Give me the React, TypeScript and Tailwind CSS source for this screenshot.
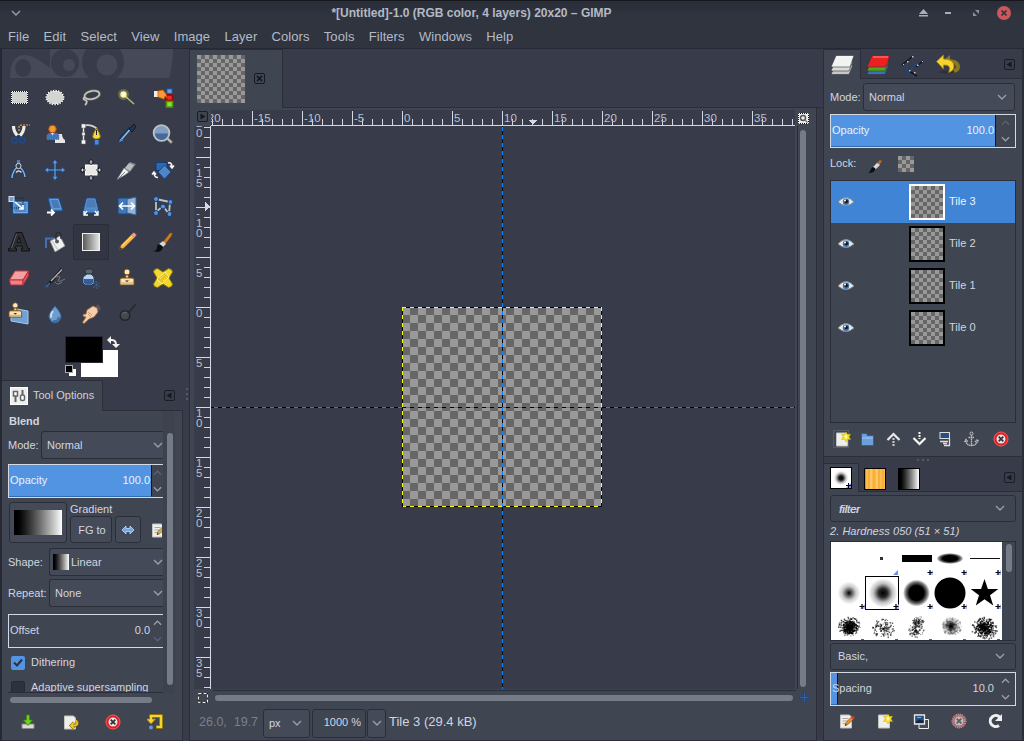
import React from 'react';

const BLUE = '#4f86c6';
const Svg = ({ children, w = 24, h = w, vb }: { children: React.ReactNode; w?: number; h?: number; vb?: string }) => (
  <svg width={w} height={h} viewBox={vb ?? `0 0 ${w} ${h}`} className="block shrink-0" fill="none">{children}</svg>
);

const Checker = ({ w, h, className = '' }: { w: number; h: number; className?: string }) => (
  <svg width={w} height={h} className={`block shrink-0 ${className}`} shapeRendering="crispEdges">
    <defs>
      <pattern id="chk4" width="8" height="8" patternUnits="userSpaceOnUse">
        <rect width="8" height="8" fill="#666" /><rect width="4" height="4" fill="#999" /><rect x="4" y="4" width="4" height="4" fill="#999" />
      </pattern>
    </defs>
    <rect width={w} height={h} fill="url(#chk4)" />
  </svg>
);

const Stamp = ({ t = '' }: { t?: string }) => (
  <g transform={t} stroke="#7a4a10" strokeWidth="1"><circle cx="12" cy="6" r="3" fill="#fbe9c4" /><path d="M10.500 9h3l.4 3.500h-3.800z" fill="#e8cf96" /><path d="M5 13.500q0-1.500 2-1.500h10q2 0 2 1.500V19H5z" fill="#f7e3b5" /><path d="M5.500 17h13" stroke="#c8a35a" /><path d="M10 14.500h4l-2 1.500z" fill="#222" stroke="none" /></g>
);

const tools: React.ReactNode[] = [
  <g shapeRendering="crispEdges"><rect x="4" y="5" width="17" height="13" fill="#cfd2cc" /><rect x="4.500" y="5.500" width="16" height="12" stroke="#fff" strokeWidth="1" /><rect x="4.500" y="5.500" width="16" height="12" stroke="#111" strokeDasharray="1 1" strokeDashoffset=".5" /></g>,
  <><ellipse cx="12" cy="11.500" rx="9" ry="7" fill="#d3d6d0" stroke="#fff" strokeWidth="1.300" /><ellipse cx="12" cy="11.500" rx="9.200" ry="7.200" stroke="#111" strokeWidth="1.200" strokeDasharray="1.200 1.500" /></>,
  <><ellipse cx="13" cy="9" rx="7.600" ry="4" stroke="#77796f" strokeWidth="2.600" transform="rotate(-12 13 9)" /><ellipse cx="13" cy="9" rx="7.600" ry="4" stroke="#d4d5cd" strokeWidth="1.200" transform="rotate(-12 13 9)" /><path d="M6 11q-3 2 0 3t1 4l-1 1" stroke="#c5c6bc" strokeWidth="1.800" /></>,
  <><path d="M10 10l10 9" stroke="#3d4036" strokeWidth="3" /><path d="M10 10l9 8" stroke="#aeb184" strokeWidth="1.600" /><circle cx="8.500" cy="8.500" r="5.500" fill="#f5ef70" opacity=".25" /><circle cx="8.500" cy="8.500" r="3.200" fill="#fbf59a" /><circle cx="8.500" cy="8.500" r="1.500" fill="#fff" /></>,
  <><rect x="15.500" y="2.500" width="6" height="5.500" fill="#729fcf" stroke="#204a87" strokeWidth="1.600" /><rect x="15.500" y="9" width="6" height="5.500" fill="#ef2929" stroke="#a40000" strokeWidth="1.600" /><rect x="15.500" y="15.500" width="6" height="5.500" fill="#8ae234" stroke="#4e9a06" strokeWidth="1.600" /><path d="M3 5h4v6H3z" fill="#eee" /><path d="M7 5l5-1 3 4 1 4-2-2-1 3-6-2z" fill="#f99a35" stroke="#ce5c00" strokeWidth=".8" /></>,
  <><path d="M6.500 4q0 6 4.500 10M17 4q0 6-4.500 10" stroke="#eceee8" strokeWidth="3.200" /><path d="M12 9V5q0-2 3-2h8" stroke="#f5a52a" strokeDasharray="2 1" strokeWidth="1.200" /><path d="M11.500 13.500l-2 2m2-2l2 2" stroke="#1c3b6a" strokeWidth="2" /><ellipse cx="7.500" cy="18.500" rx="2.700" ry="2.500" stroke="#1f4986" strokeWidth="1.800" /><ellipse cx="15.500" cy="18.500" rx="2.700" ry="2.500" stroke="#1f4986" strokeWidth="1.800" /></>,
  <><path d="M12 21v-4q3 0 3-5h4q0 4 3 6v3z" fill="#e6e7e4" /><path d="M4 17.500V13l3-2h6l3 2v4.500z" fill="#3f77bd" stroke="#c04aa8" strokeDasharray="1 1" /><circle cx="9.500" cy="7" r="3.800" fill="#f39a35" stroke="#a85206" /><path d="M8 11l1.500 2.500L11 11" fill="#d5e5fa" /></>,
  <><path d="M4.500 3v19" stroke="#e9eae5" strokeWidth="1.400" /><path d="M5 3.500Q13 2 18 7" stroke="#d3d5cc" strokeWidth="1.800" /><path d="M2.500 2h4v4h-4zM2.500 18h4v4h-4zM3 10.500h3v3H3z" fill="#f5f5f2" stroke="#6c6f68" strokeWidth=".5" /><path d="M17.500 6q-4 6-4 9l2 2h4l2-2q0-3-4-9z" fill="#f3d94a" stroke="#876900" /><path d="M17.500 8v5" stroke="#222" /><path d="M15.500 17.500h4.500V23h-4.500z" fill="#4d8bd0" stroke="#204a87" /></>,
  <><path d="M4.500 20l2-4 9-10" stroke="#173152" strokeWidth="3.600" /><path d="M5 19l3-3.500 7-8" stroke="#8db8ea" strokeWidth="1.800" /><path d="M14 7l3 3 4-5-2-3z" fill="#203450" stroke="#0f1a2a" /><path d="M3.500 20.500l3-4 2 2z" fill="#4c86cf" /></>,
  <><path d="M16 16l5 5" stroke="#6b6d66" strokeWidth="3.400" /><path d="M16 16l4.500 4.500" stroke="#d0d1ca" strokeWidth="1.500" /><circle cx="10.500" cy="11" r="7.900" fill="#829ec0" stroke="#bcc1c7" strokeWidth="1.800" /><path d="M4 11.500h13a6.500 6.500 0 0 1-13 0z" fill="#45699a" /></>,
  <><path d="M11 8Q5.500 12 5 21M12 8q5.500 4 6 12" stroke="#1d3c66" strokeWidth="3.600" /><path d="M10.500 9q-5 4-5.500 11M12.500 9q5 4 5.500 10" stroke="#8fb5e1" strokeWidth="1.400" /><rect x="10" y="2" width="3" height="4" fill="#4e7fb9" /><circle cx="11.500" cy="8" r="2.600" fill="#3a3d44" stroke="#d0d4d8" /><path d="M9 14.500q2.500-3 5.500 0" stroke="#d4d7db" strokeWidth="1.500" /></>,
  <><path d="M12 3v18M3 12h18" stroke="#153e78" strokeWidth="2.600" /><path d="M12 1.500L9 5.500h6zM12 22.500l-3-4h6zM1.500 12l4-3v6zM22.500 12l-4-3v6z" fill="#5b93d7" stroke="#153e78" strokeWidth=".6" /><path d="M12 4v16M4 12h16" stroke="#6ba3e3" strokeWidth="1.200" /></>,
  <><rect x="6.500" y="7" width="11.500" height="10" fill="#e8e9e6" stroke="#fff" /><path d="M12 1l-3 3 3 3 3-3zM12 17l-3 3 3 3 3-3zM1 12l2.500-3L7 12l-3.500 3zM17 12l3-3 3 3-3 3z" fill="#15171b" /><path d="M12 2v4M10.500 4h3M12 18v4M10.500 20h3M2 12h4M18 12h4M3.500 10.500v3M20.500 10.500v3" stroke="#e6e7ea" strokeWidth=".9" /></>,
  <><path d="M15 4l6 2-6 8-6-3z" fill="#7c8087" /><path d="M14 5l5 2-4 6-5-3z" fill="#b9bcc0" /><path d="M9 10l5 4-4 3-8 4.500z" fill="#f2f2ef" stroke="#77797c" strokeWidth=".6" /><path d="M3 21l7-7" stroke="#85878a" /></>,
  <><path d="M5 4.500h11v8H5z" fill="#2f68ac" stroke="#123b73" /><path d="M13.500 7l6.500 7-6.500 7L7 14z" fill={BLUE} stroke="#174784" /><path d="M17 5q4-1 4 4m-2-1.500l2 2.500 2-2.500M7 19.500q-4 0-4-5m-2 2l2-2.500 2 2.500" stroke="#f5f7fa" strokeWidth="1.500" /></>,
  <><rect x="5.500" y="7" width="16" height="13" fill={BLUE} stroke="#174784" /><rect x="7" y="8.500" width="13" height="10" stroke="#76a8df" /><path d="M4 4h12v10H4z" stroke="#0e2240" strokeDasharray="1 1" /><rect x="2" y="2.500" width="5" height="5" fill="#719ed0" stroke="#cfe0f2" /><path d="M8 8l8 7m0-4v4h-4" stroke="#fff" strokeWidth="1.600" /></>,
  <><path d="M5 4h11l4 13H8z" fill={BLUE} stroke="#174784" /><path d="M7 5.500h8l3 9h-8z" fill="#487bb6" stroke="#76a8df" strokeWidth=".7" /><path d="M4 18.500h7m-3-3l3 3-3 3" stroke="#fff" strokeWidth="1.800" /></>,
  <><path d="M7.500 4h9l4 15h-17z" fill={BLUE} stroke="#174784" /><path d="M8 5h8l2 9H6z" fill="#4a7db8" stroke="#6d9bd0" strokeWidth=".6" /><path d="M8 17l-3 4m0-4v4h4M16 17l3 4m0-4v4h-4" stroke="#fff" strokeWidth="1.300" /></>,
  <><path d="M3 4h10v16H3z" fill="#3f77b8" stroke="#174784" /><path d="M12 5l9-2v18l-9-2z" fill="#93b3d7" stroke="#315e94" /><path d="M5 12h14M8 8.500L4.500 12 8 15.500M16 8.500l3.500 3.500-3.500 3.500" stroke="#fff" strokeWidth="1.700" /></>,
  <><path d="M5 5l14 3-1 12M5 5v13l7-6 6 8" stroke="#bfc3c5" strokeWidth="1.800" /><g fill="#5b92d3" stroke="#123b73"><circle cx="5" cy="5" r="2.500" /><circle cx="19.500" cy="8" r="2.400" /><circle cx="5" cy="19" r="2.500" /><circle cx="12" cy="12.500" r="2.500" /><circle cx="18.500" cy="20" r="2.500" /></g></>,
  <><path d="M1.500 21v-2.500H3L9 2.500h6l6 16h1.500V21h-8v-2.500h1.300l-.8-2.500H9l-.8 2.500h1.300V21zM10 12.500h4L12 7z" fill="#2c2e31" stroke="#0e0f11" strokeWidth=".9" fillRule="evenodd" /><path d="M9.500 4l-5 14" stroke="#6d7074" strokeWidth=".8" /></>,
  <><path d="M3 18V8.500h8" stroke="#4471ad" strokeWidth="2" /><path d="M7 11l10-5 5 10-10 6z" fill="#f1f2ef" stroke="#85888b" strokeWidth=".7" /><path d="M9 11l6 9" stroke="#cfd0d0" strokeWidth="1.500" /><path d="M13 10V4q3-4 5 1v4" stroke="#292c30" strokeWidth="1.300" /><circle cx="14" cy="11.500" r="2" fill="#54575c" /></>,
  <><defs><linearGradient id="bt"><stop stopColor="#555" /><stop offset="1" stopColor="#e8e8e8" /></linearGradient></defs><rect x="3.500" y="3.500" width="17" height="17" fill="url(#bt)" stroke="#f0f0ec" /></>,
  <><path d="M4 20l2-5L17 4l3 3L9 18z" fill="#f2b54a" stroke="#9a5b08" strokeWidth=".8" /><path d="M7 16L18 5" stroke="#ffe09a" /><path d="M16.500 4.500L19 2.500l2.500 2.500-2 2.500z" fill="#f2a0a0" stroke="#b04c4c" strokeWidth=".5" /><path d="M4 20l1-3 2 2z" fill="#333" /></>,
  <><path d="M12 12l7-9h2.500l-1 3-6 8z" fill="#d07c22" stroke="#804207" strokeWidth=".6" /><path d="M8 14l4-3 3 3-3 3z" fill="#d4d7d9" /><path d="M2 21q4 0 4-4t4-2l2 2q-1 5-6 5z" fill="#0d0e10" /></>,
  <><path d="M2.500 14L8 5h13.500L16 14z" fill="#f5a0a0" stroke="#c03a45" /><path d="M2.500 14H16v5H3.500z" fill="#f28088" stroke="#b62f3c" /><path d="M16 14l5.500-9v5L16 19z" fill="#da5560" stroke="#b62f3c" /></>,
  <><path d="M5 19L19 3" stroke="#1a1b1e" strokeWidth="3.200" /><path d="M8 15L19 3.500" stroke="#b5b8ba" strokeWidth="1.300" /><path d="M11 12q8-4 5 1t6 0M12 16q3 4 7 0" stroke="#74777a" /><path d="M3 21l4-4" stroke="#305f9c" strokeWidth="2" /></>,
  <><rect x="6" y="3" width="8" height="5" rx="2" fill="#5a646b" stroke="#292e33" /><path d="M8 8h4l3 3v6l-2 2H6l-2-2v-6z" fill="#bdd1e7" stroke="#1f3f6b" /><path d="M5 13h9v4l-2 1.500H7L5 17z" fill="#315e98" /><path d="M14 17l8 4m-8 1l7-6m-4-1l1 8" stroke="#3a6baa" strokeWidth="1" strokeDasharray="2 1" /></>,
  <Stamp />,
  <><g stroke="#8d7700" strokeWidth=".9"><path d="M2.500 6q0-3 4-3.500L12 6l5.500-3.500q4 .5 4 3.500L18 12l3.500 6q0 3-4 3.500L12 18l-5.500 3.500q-4-.5-4-3.500L6 12z" fill="#f2d632" strokeLinejoin="round" /><path d="M6 13L14 6l4 5-7 7z" fill="#e9c71a" stroke="#fff08a" strokeWidth="1" /></g><path d="M9 13l4-4M12 15l4-4" stroke="#fff6a5" strokeDasharray="1 1" /></>,
  <><path d="M10 7l11 2v13L4 19v-4z" fill="#6fa0d7" stroke="#a6c9ed" /><Stamp t="translate(-2.500 -2) scale(.9)" /></>,
  <><path d="M12 4Q5 12 6 15.500q2 5.500 6 5.500t6-5.500Q19 12 12 4z" fill="#6f9ccc" stroke="#315f97" /><path d="M10 9q-3 4-1.500 6.500" stroke="#c9def5" strokeWidth="2" /><path d="M10 19q5 1 6-4" stroke="#3b6ea8" strokeWidth="2" /></>,
  <><path d="M15 6l4-4 3 4-4 6z" fill="#55505a" /><path d="M8 8l6-4 4 2 1 4-4 5-5 2-5 4.500-1.500-1L7 15l-2.500-.5-.5-2 3-.5z" fill="#f3cfac" stroke="#a96a36" strokeWidth=".8" /><path d="M9 10l4 3m-4-1l3 3" stroke="#bf8555" strokeWidth=".7" /></>,
  <><path d="M13 11l8-9" stroke="#272a2d" strokeWidth="1.800" /><circle cx="10" cy="13.500" r="4.800" fill="#45484d" stroke="#222529" strokeWidth="1.500" /><path d="M7.500 12q2-3 4-1" stroke="#6d7174" /></>,
];

const Arrow = ({ up = false, dim = false, w = 10 }: { up?: boolean; dim?: boolean; w?: number }) => (
  <Svg w={w} h={6} vb="0 0 10 6"><path d={up ? 'M1 5l4-4 4 4' : 'M1 1l4 4 4-4'} stroke={dim ? '#5d6270' : '#9a9eaa'} strokeWidth="1.400" /></Svg>
);
const MenuBtn = ({ right = false }: { right?: boolean }) => (
  <Svg w={11}><rect x=".5" y=".5" width="10" height="10" rx="1.500" stroke="#1b1d24" /><path d={right ? 'M3.500 2.500v6l5-3z' : 'M7.500 2.500v6l-5-3z'} fill="#16181d" /></Svg>
);
const Close = ({ s = 16, dull = false }: { s?: number; dull?: boolean }) => (
  <Svg w={s} vb="0 0 16 16"><circle cx="8" cy="8" r="7" fill={dull ? '#a65c62' : '#dd2027'} stroke={dull ? '#dca8a8' : '#ff5a57'} strokeWidth="1" strokeDasharray={dull ? '1 1' : undefined} />{dull && <circle cx="8" cy="8" r="5.500" stroke="#cfb5b7" strokeDasharray="1 1" />}<circle cx="8" cy="8" r="4.500" fill={dull ? '#bdbebf' : '#e7e7e6'} /><path d="M5.700 5.700l4.600 4.600m0-4.600l-4.600 4.600" stroke={dull ? '#5c5e62' : '#333'} strokeWidth="1.800" /></Svg>
);
const Page = () => <path d="M2.500 1.500h9l2 2v11h-11z" fill="#eeeeea" stroke="#c3c4bf" />;
const PageStar = () => <Svg w={17} vb="0 0 17 16"><Page /><path d="M12 .5l1.500 2.500 3-.2-1.500 2.500 1.500 2.700-3-.2L12 10.500l-1.500-2.700-3 .2L9 5.300 7.500 2.800l3 .2z" fill="#f6dd24" stroke="#d2b300" strokeWidth=".5" /><path d="M12 2.500l1.500 2.500L12 8l-1.500-3z" fill="#fffab9" /></Svg>;
const PagePen = ({ y = false }: { y?: boolean }) => <Svg w={17} vb="0 0 17 16"><Page /><path d="M4.500 5h6m-6 2.500h6m-6 2.500h4" stroke="#aaa" /><path d="M7 12l1-3 6-6 2 2-6 6z" fill={y ? '#e0ae45' : '#ef8f2a'} stroke="#754500" strokeWidth=".6" /><path d="M13 4l2-2 2 2-2 2z" fill="#dd3030" /><path d="M7 12l.7-1.500L8.500 12z" fill="#111" /></Svg>;
const Dup = () => <Svg w={17} vb="0 0 17 16"><path d="M6 6h9.500v9H6z" fill="#444b58" stroke="#eceeea" /><path d="M1.500 1.500h10v9h-10z" fill="#284f84" stroke="#e8e9e6" strokeWidth="1.300" /><path d="M3 8l3-2 4.500 1v2.500H3z" fill="#15283f" /><path d="M4 4h4" stroke="#7eabe0" /></Svg>;
const Lr = () => <Svg w={14} h={10}><path d="M1 5l4-4v2.500h4V1l4 4-4 4V6.500H5V9z" fill="#73a7e6" stroke="#c1daf5" strokeWidth=".8" /></Svg>;

const Combo = ({ className = '', children, arrow = 'mr-[7px]' }: { className?: string; children: React.ReactNode; arrow?: string }) => (
  <div className={`flex items-center rounded-[3px] border border-[#2b2e39] ${className}`}><span className="flex grow items-center whitespace-nowrap">{children}</span><span className={arrow}><Arrow /></span></div>
);

const Spin = ({ label, value, fill, className, cut = false, dimUp = false, dimDown = false, inner, ink = '' }: { label: string; value: string; fill: string; className: string; cut?: boolean; dimUp?: boolean; dimDown?: boolean; inner: string; ink?: string }) => (
  <div className={`flex border border-[#d3dae3] ${cut ? 'border-r-0' : ''} ${className}`}>
    <div className={`relative h-full shrink-0 ${inner}`}>
      <div className={`absolute inset-y-0 left-0 border-r border-b border-r-[#11141b] border-b-[#2f6cb5] bg-[#5294e2] ${fill}`} />
      <div className={`relative flex h-full items-center justify-between pr-[2px] pb-[2px] pl-px ${ink}`}><span>{label}</span><span>{value}</span></div>
    </div>
    <div className="flex grow flex-col items-center justify-between overflow-hidden py-[5px]"><Arrow up dim={dimUp} w={9} /><Arrow dim={dimDown} w={9} /></div>
  </div>
);

const ruler = (a: number, b: number) => Array.from({ length: b - a + 1 }, (_, i) => a + i);

const HRuler = () => (
  <svg width="584" height="16" className="block overflow-hidden" shapeRendering="crispEdges">
    {ruler(-19, 39).map(n => <rect key={n} x={191 + n * 10} y={n % 5 ? 9 : 1} width="1" height={n % 5 ? 7 : 15} fill="#d3dae3" />)}
    <rect y="15" width="584" height="1" fill="#d3dae3" />
    {ruler(-4, 7).map(n => <text key={n} x={193 + n * 50} y="12" fontSize="11.500" fill="#b9c0cb">{n * 5}</text>)}
    <path d="M317.500 10h9l-4.500 5z" fill="#d3dae3" />
  </svg>
);
const VRuler = () => (
  <svg width="17" height="563" className="block overflow-hidden" shapeRendering="crispEdges">
    {ruler(-18, 38).map(n => <rect key={n} x={n % 5 ? 10 : 2} y={181 + n * 10} width={n % 5 ? 7 : 15} height="1" fill="#d3dae3" />)}
    <rect x="16" width="1" height="563" fill="#d3dae3" />
    {ruler(-4, 7).flatMap(n => String(n * 5).split('').map((c, i) => <text key={`${n}-${i}`} x="2" y={191 + n * 50 + i * 10} fontSize="11.500" fill="#b9c0cb">{c}</text>))}
    <path d="M11 76v9l5-4.500z" fill="#d3dae3" />
  </svg>
);

const Dash = ({ x1, y1, x2, y2, c, o = 0 }: { x1: number; y1: number; x2: number; y2: number; c: string; o?: number }) => (
  <g strokeWidth="1"><path d={`M${x1} ${y1}L${x2} ${y2}`} stroke="#000" /><path d={`M${x1} ${y1}L${x2} ${y2}`} stroke={c} strokeDasharray="4 4" strokeDashoffset={o} /></g>
);

const Canvas = () => (
  <svg width="584" height="563" className="block" shapeRendering="crispEdges">
    <defs><pattern id="chk8" x="191" y="181" width="16" height="16" patternUnits="userSpaceOnUse"><rect width="16" height="16" fill="#666" /><rect width="8" height="8" fill="#999" /><rect x="8" y="8" width="8" height="8" fill="#999" /></pattern></defs>
    <rect x="191" y="181" width="200" height="200" fill="url(#chk8)" />
    <Dash x1={191} y1={181.5} x2={391} y2={181.5} c="#ff0" />
    <Dash x1={191} y1={380.5} x2={391} y2={380.5} c="#ff0" />
    <Dash x1={191.5} y1={181} x2={191.5} y2={381} c="#ff0" />
    <Dash x1={390.5} y1={181} x2={390.5} y2={381} c="#ff0" />
    <Dash x1={0} y1={281.5} x2={584} y2={281.5} c="#0a84ff" o={5} />
    <Dash x1={291.5} y1={0} x2={291.5} y2={563} c="#0a84ff" o={7} />
  </svg>
);

const Eye = () => <Svg w={18} h={12}><path d="M1 6q8-9 16 0-8 7-16 0z" fill="#e9eae8" stroke="#868a8e" strokeWidth="1" /><circle cx="9" cy="5.700" r="3.200" fill="#3b6da9" /><circle cx="9.300" cy="5.500" r="1.700" fill="#0c1628" /><circle cx="8" cy="4.500" r="1" fill="#fff" /></Svg>;

const splat = (cx: number, cy: number, seed: number, n: number, r: number, op: number) => {
  let s = seed;
  const rnd = () => { s = (s * 16807) % 2147483647; return s / 2147483647; };
  return Array.from({ length: n }, (_, i) => {
    const a = rnd() * 6.283;
    const d = r * Math.pow(rnd(), 0.8);
    const z = rnd() > 0.6 ? 1.5 : 1;
    return <rect key={i} x={cx + Math.cos(a) * d} y={cy + Math.sin(a) * d * 0.9} width={z} height={z} fill="#000" opacity={op} />;
  });
};

const Brushes = () => (
  <svg width="171" height="98" className="block bg-white">
    <defs>
      <radialGradient id="soft"><stop stopColor="#000" /><stop offset=".25" stopColor="#000" stopOpacity=".65" /><stop offset=".6" stopColor="#000" stopOpacity=".2" /><stop offset="1" stopColor="#000" stopOpacity="0" /></radialGradient>
      <radialGradient id="mid"><stop stopColor="#000" /><stop offset=".3" stopColor="#000" stopOpacity=".85" /><stop offset=".65" stopColor="#000" stopOpacity=".25" /><stop offset="1" stopColor="#000" stopOpacity="0" /></radialGradient>
      <radialGradient id="hard"><stop offset=".55" stopColor="#000" /><stop offset=".8" stopColor="#000" stopOpacity=".55" /><stop offset="1" stopColor="#000" stopOpacity="0" /></radialGradient>
    </defs>
    <rect x="49" y="15" width="3" height="3" fill="#333" />
    <rect x="71" y="13" width="30" height="7" fill="#000" />
    <ellipse cx="119" cy="16.500" rx="13.500" ry="5.500" fill="url(#hard)" />
    <rect x="139" y="16" width="30" height="1" fill="#111" />
    <circle cx="18" cy="51" r="11.500" fill="url(#soft)" />
    <circle cx="52" cy="51" r="14.500" fill="url(#mid)" />
    <rect x="34.500" y="34.500" width="33" height="33" fill="none" stroke="#000" />
    <circle cx="85.500" cy="51" r="13.500" fill="url(#hard)" />
    <circle cx="119" cy="51" r="15.500" fill="#000" />
    <path d="M153.500 37l3.400 10h10.400l-8.300 6.300 3.200 10.200-8.700-6.200-8.700 6.200 3.200-10.200-8.300-6.300h10.400z" fill="#000" />
    {splat(18, 84, 77, 260, 11, 0.6)}{splat(18, 85, 78, 210, 7, 0.85)}
    {splat(52, 86, 991, 130, 11, 0.6)}
    {splat(85, 88, 1234, 100, 8, 0.5)}{splat(87, 79, 5234, 80, 6, 0.5)}
    <circle cx="120" cy="84" r="10" fill="url(#soft)" />{splat(120, 84, 4321, 220, 10, 0.25)}
    {splat(153, 86, 8080, 260, 13, 0.6)}{splat(153, 85, 333, 200, 8, 0.85)}
    <path d="M67 28v5h-5z" fill="#6c8cf0" />
    {[[99, 30], [133, 30], [167, 30], [31, 64], [65, 64], [99, 64], [133, 64], [167, 64]].map(([x, y]) => <g key={`${x}-${y}`}><path d={`M${x + 3} ${y - 2}v5h-5z`} fill="#a8bbff" /><path d={`M${x - 2.5} ${y + .5}h5M${x} ${y - 2}v5`} stroke="#000" strokeWidth="1.200" /></g>)}
    {[31, 65, 99, 133, 167].map(x => <path key={x} d={`M${x - 1} 97.500h3`} stroke="#c33" />)}
  </svg>
);

const ToolOptions = () => (
  <div className="h-[330px] w-[181px] border-r border-b border-[#2b2e39] bg-[#404552] pl-[6px]">
    <div className="flex h-[282px]">
      <div className="w-[155px] overflow-hidden border-b border-[#2b2e39]">
        <div className="flex h-[19px] items-center pt-[1px] pl-px font-bold">Blend</div>
        <div className="mt-px flex h-[28px] items-center"><span className="w-[33px]">Mode:</span><Combo className="h-full w-[122px] rounded-r-none border-r-0 bg-[#444a58] pl-[5px]" arrow="mr-0">Normal</Combo></div>
        <Spin label="Opacity" value="100.0" inner="w-[143px]" fill="w-[143px]" ink="text-[#edf2f8]" className="mt-[5px] h-[34px] w-full" cut dimUp />
        <div className="mt-[4px] flex h-[41px]">
          <div className="ml-px flex w-[58px] shrink-0 items-center justify-center rounded-[3px] border border-[#2b2e39] bg-[#444a58]"><div className="h-[25px] w-[48px] bg-linear-to-r from-black to-white" /></div>
          <div className="ml-[3px] shrink-0"><div className="h-[14px] leading-[14px]">Gradient</div>
            <div className="flex h-[27px]"><div className="flex w-[42px] items-center justify-center rounded-[3px] border border-[#2b2e39] bg-[#444a58] pl-[2px] whitespace-nowrap">FG to</div><div className="ml-[3px] flex w-[26px] items-center justify-center rounded-[3px] border border-[#2b2e39] bg-[#444a58]"><Lr /></div><div className="mt-[6px] ml-[9px] w-[12px] overflow-hidden"><PagePen y /></div></div></div>
        </div>
        <div className="mt-[5px] flex h-[28px] items-center"><span className="w-[41px]">Shape:</span><Combo className="h-full w-[114px] rounded-r-none border-r-0 bg-[#444a58] pl-[3px]" arrow="mr-0"><span className="mr-[2px] h-[16px] w-[16px] bg-linear-to-r from-black to-white" />Linear</Combo></div>
        <div className="mt-[3px] flex h-[28px] items-center"><span className="w-[41px]">Repeat:</span><Combo className="h-full w-[114px] rounded-r-none border-r-0 bg-[#444a58] pl-[5px]" arrow="mr-0">None</Combo></div>
        <Spin label="Offset" value="0.0" inner="w-[143px]" fill="hidden" className="mt-[7px] h-[34px] w-full" cut dimDown />
        <div className="mt-[6px] flex h-[16px] items-center"><span className="mt-px mr-[6px] ml-[3px] flex h-[14px] w-[14px] items-center justify-center rounded-[2px] bg-[#5294e2]"><Svg w={10} h={9}><path d="M1 4.500L4 7.500 9 1.500" stroke="#283243" strokeWidth="2" /></Svg></span>Dithering</div>
        <div className="mt-[9px] flex h-[16px] items-center"><span className="mt-[2px] mr-[6px] ml-[3px] h-[14px] w-[14px] shrink-0 rounded-[2px] border border-[#272a34] bg-[#2e323e]" /><span className="whitespace-nowrap">Adaptive supersampling</span></div>
      </div>
      <div className="w-[12px] bg-[#3d424e] pt-[22px] pl-[4px]"><div className="h-[252px] w-[6px] rounded-full bg-[#767b88]" /></div>
    </div>
    <div className="mt-[4px] ml-[2px] h-[6px] w-[142px] rounded-full bg-[#767b88]" />
    <div className="mt-[11px] flex h-[16px] gap-[26px] pl-[12px]">
      <Svg w={16}><path d="M2 10h12v4.500H2z" fill="#d9dbd7" stroke="#888" /><path d="M6.500 1h3v5h3L8 11.500 3.500 6h3z" fill="#6bd31c" stroke="#3b8a05" strokeWidth=".8" /></Svg>
      <Svg w={17} vb="0 0 17 16"><Page /><path d="M14 6q3 4-1 5H9m3-3l-3 3 3 3" stroke="#9a7300" strokeWidth="3" /><path d="M14 6q3 4-1 5H9m3-3l-3 3 3 3" stroke="#f3cb2d" strokeWidth="1.500" /></Svg>
      <Close />
      <Svg w={16}><path d="M4 4V2h10v11H9" stroke="#a58300" strokeWidth="3.600" /><path d="M4 10L-.500 5h9z" fill="#f6d32d" stroke="#a58300" strokeWidth=".8" /><path d="M4 6V2h10v11H9.700" stroke="#f6d32d" strokeWidth="2.200" /><circle cx="4" cy="13.500" r="2" fill="#6b95d6" /></Svg>
    </div>
  </div>
);

const LeftPanel = () => (
  <div className="flex w-[190px] flex-col border-l-2 border-r border-l-[#262933] border-r-[#2b2e39] bg-[#383c4a]">
    <div className="h-[29px] pl-[8px]">
      <Svg w={164} h={29}><path d="M0 29Q0 6 15 6q8 0 25 13V0h123q0 14-4 29z" fill="#464a58" /><ellipse cx="13" cy="19" rx="8" ry="9" fill="#383c4a" /><circle cx="55" cy="14" r="14" fill="#383c4a" /><circle cx="59" cy="16" r="6" fill="#464a58" /><circle cx="93" cy="13" r="21" fill="#383c4a" /><circle cx="97" cy="16" r="10.500" fill="#464a58" /></Svg>
    </div>
    <div className="mt-[2px] -ml-px grid w-[180px] grid-cols-5">
      {tools.map((t, i) => <div key={i} className={`flex h-[36px] w-[36px] items-center justify-center ${i === 22 ? 'rounded-[2px] border border-[#2b2e39] bg-[#323642]' : ''}`}><Svg>{t}</Svg></div>)}
    </div>
    <div className="h-[48px] pl-[62px]">
      <Svg w={56} h={46}><rect x="17" y="18" width="37" height="27" fill="#fff" /><rect x="1" y="3" width="38" height="28" fill="#383c4a" /><rect x="1.500" y="4.500" width="37" height="26" fill="#000" stroke="#262933" /><path d="M45 8h3q4 0 4 5" stroke="#f2f2f0" strokeWidth="2" /><path d="M47 4v8l-4-4zM48 12h8l-4 4z" fill="#f2f2f0" /><rect x="5" y="37" width="7" height="7" fill="#fff" /><rect x="1.500" y="33.500" width="7" height="7" fill="#000" stroke="#aaa" /></Svg>
    </div>
    <div className="flex h-[31px]">
      <div className="flex w-[101px] items-center border-t border-r border-[#2b2e39] bg-[#404552] pl-[8px] text-[#ccd2dd]">
        <Svg w={18}><rect x=".5" y=".5" width="17" height="17" fill="#eeeeeb" stroke="#fff" /><path d="M5.500 9v6M12.500 3v6" stroke="#62666a" strokeWidth="2" /><rect x="3.500" y="4.500" width="4" height="4.500" fill="#fff" stroke="#62666a" strokeWidth="1.500" /><rect x="10.500" y="8" width="4" height="5.500" rx="1.500" fill="#fff" stroke="#62666a" strokeWidth="1.500" /></Svg>
        <span className="ml-[5px] pb-[2px] whitespace-nowrap">Tool Options</span>
      </div>
      <div className="flex w-[80px] justify-end border-b border-[#2b2e39] pt-[10px] pr-[8px]"><MenuBtn /></div>
      <div className="pt-[7px] pl-[2px]"><Svg w={4} h={14}><path d="M1 1h2v2H1zM1 6h2v2H1zM1 11h2v2H1z" fill="#555a68" /></Svg></div>
    </div>
    <ToolOptions />
  </div>
);

const Center = () => (
  <div className="flex w-[633px] flex-col bg-[#383c4a]">
    <div className="flex h-[59px]">
      <div className="flex w-[93px] border-t border-r border-[#2b2e39] bg-[#404552] pt-[5px] pl-[7px]"><Checker w={48} h={48} />
        <div className="mt-[18px] ml-[9px]"><Svg w={11}><rect x=".5" y=".5" width="10" height="10" rx="1.500" stroke="#171a20" /><path d="M3 3l5 5m0-5L3 8" stroke="#14161a" strokeWidth="1.700" /></Svg></div></div>
      <div className="grow border-b border-[#2b2e39]" />
    </div>
    <div className="flex h-[633px] w-[627px] flex-col border-r border-b border-[#2b2e39] bg-[#404552]">
      <div className="flex pt-[2px]">
        <div className="flex h-[16px] w-[21px] pt-[1px] pl-[7px]"><MenuBtn right /></div>
        <div className="bg-[#383c4a]"><HRuler /></div>
        <div className="pt-[3px] pl-[3px]"><Svg w={11}><rect width="11" height="11" fill="#eee" /><rect x=".5" y=".5" width="10" height="10" stroke="#111" strokeDasharray="1 1" strokeDashoffset=".5" /><circle cx="5" cy="5" r="2.500" stroke="#555" strokeWidth="1.500" /><path d="M7 7l2.500 2.500" stroke="#7f826a" strokeWidth="1.500" /></Svg></div>
      </div>
      <div className="flex">
        <div className="ml-[4px] bg-[#383c4a]"><VRuler /></div>
        <div className="bg-[#383c4a]"><Canvas /></div>
        <div className="ml-[2px] w-[11px] border-l border-[#2b2e39] pt-[4px] pl-[2px]"><div className="h-[557px] w-[6px] rounded-full bg-[#767b88]" /></div>
      </div>
      <div className="flex h-[18px] pt-px">
        <div className="w-[23px] pt-[3px] pl-[8px]"><Svg w={10}><rect x=".5" y=".5" width="9" height="9" stroke="#181b20" /><rect x=".5" y=".5" width="9" height="9" stroke="#f2f2e9" strokeDasharray="3 2" /></Svg></div>
        <div className="w-[583px] border-t border-[#2b2e39] pt-[4px] pl-[2px]"><div className="h-[6px] w-[578px] rounded-full bg-[#767b88]" /></div>
        <div className="pt-[2px] pl-[3px]"><Svg w={11}><path d="M5.500 0v11M0 5.500h11" stroke="#1d4680" strokeWidth="2.400" /><path d="M5.500 1v9M1 5.500h9" stroke="#2f62a5" /></Svg></div>
      </div>
      <div className="flex h-[31px] items-center pt-[1px] text-[11px]">
        <span className="w-[73px] pb-[2px] pl-[9px] text-[12.500px] text-[#7b808d]">26.0,&nbsp; 19.7</span>
        <Combo className="h-[29px] w-[47px] bg-[#444a58] pl-[5px]"><span className="pb-px">px</span></Combo>
        <div className="ml-[2px] flex h-[29px] w-[54px] items-center justify-end rounded-[3px] border border-[#2b2e39] pr-[4px] pb-[2px]">1000 %</div>
        <div className="ml-[1px] flex h-[29px] w-[19px] items-center justify-center rounded-[3px] border border-[#2b2e39] bg-[#444a58]"><Arrow /></div>
        <span className="ml-[3px] pb-[2px] text-[13px]">Tile 3 (29.4 kB)</span>
      </div>
    </div>
  </div>
);

const Stack = ({ c }: { c: [string, string, string] }) => (
  <Svg w={24} h={22}><g stroke="#30343d" strokeWidth=".6"><path d="M5 11h18l-4 9.500H1z" fill={c[2]} /><path d="M5 7.500h18L19 17H1z" fill={c[1]} /><path d="M6 1.500h18l-4 11.500H1z" fill={c[0]} /></g><path d="M7 3h15" stroke="#fff" opacity=".5" /></Svg>
);

const RightPanel = () => (
  <div className="flex w-[201px] flex-col border-l border-r-2 border-[#2b2e39] bg-[#383c4a]">
    <div className="flex h-[30px]">
      <div className="w-[37px] border-t border-r border-[#2b2e39] bg-[#404552] pt-[4px] pl-[6px]"><Stack c={['#f3f3f1', '#dcdddb', '#c8c9c7']} /></div>
      <div className="flex grow border-b border-[#2b2e39]">
        <div className="pt-[5px] pl-[5px]"><Stack c={['#ec2020', '#50a61a', '#3b72b5']} /></div>
        <div className="pt-[5px] pl-[11px]"><Svg w={24}><path d="M8 19q4-9 12-10M6 10q-2 12 8 12M12 6q0 5 4 6" stroke="#20467d" strokeWidth="1.200" /><path d="M1 11l11-9M15 13l7-6M8 17l8 5" stroke="#14161b" strokeWidth="1.500" /><path d="M2 10h1v1H2zM6 7h1.500v1.500H6zM11 2h1.500v1.500H11zM16 12h1.500v-1.500H16zM21 7h1v1h-1zM8 16h1.500v1.500H8zM13 18h1.500v1.500H13z" fill="#c5cad0" /></Svg></div>
        <div className="pt-[5px] pl-[11px]"><Svg w={24} h={20}><ellipse cx="12" cy="18" rx="9" ry="1.500" fill="#2c303b" /><path d="M8 7h6q8 1 8 6 0 3-4 4" stroke="#8a7722" strokeWidth="4" /><path d="M14 1v12L7 7z" fill="#8a7722" /><path d="M7.500 1v4q10 0 10.500 7 0 5-5.500 6.500 4-8-5-7.500v4L.5 7.500z" fill="#f6d32d" stroke="#a98400" strokeWidth=".8" /></Svg></div>
        <div className="ml-auto pt-[10px] pr-[7px]"><MenuBtn /></div>
      </div>
    </div>
    <div className="flex h-[378px] flex-col border-b border-[#2b2e39] bg-[#404552] px-[6px]">
      <div className="mt-[4px] flex h-[28px] items-center"><span className="w-[33px]">Mode:</span><Combo className="h-full w-[152px] bg-[#444a58] pl-[5px]">Normal</Combo></div>
      <Spin label="Opacity" value="100.0" inner="w-[165px]" fill="w-[165px]" ink="text-[#edf2f8]" className="mt-[3px] h-[34px] w-[186px]" dimUp />
      <div className="flex h-[32px] items-center"><span className="pb-[2px]">Lock:</span>
        <span className="mt-[3px] ml-[11px]"><Svg w={16}><path d="M8 7l5-5 2 1-4 6z" fill="#bd6c24" /><path d="M6 9l4-4 3 2-4 4z" fill="#d7d8d8" /><path d="M1 15q2-1 3-4t4-1q1 5-7 5z" fill="#0e1012" /></Svg></span>
        <span className="ml-[15px]"><Checker w={16} h={16} /></span></div>
      <div className="h-[243px] w-[186px] border border-[#2b2e39]">
        {[3, 2, 1, 0].map(n => <div key={n} className={`flex h-[42px] items-center ${n === 3 ? 'bg-[#4084d6] text-[#eff4fa]' : ''}`}>
          <span className="ml-[6px] w-[72px]"><Eye /></span><div className={`border-2 ${n === 3 ? 'border-white' : 'border-black'}`}><Checker w={32} h={32} /></div><span className="ml-[4px] pb-[2px]">Tile {n}</span></div>)}
      </div>
      <div className="mt-[7px] flex h-[18px] shrink-0 items-center gap-[10px] pl-[3px]">
        <div className="flex h-[18px] w-[16px] items-center border border-[#555b69]"><PageStar /></div>
        <Svg w={16}><path d="M2.500 2.500h5l1 2h6v10h-12z" fill="#6ba0db" stroke="#315f98" /><path d="M3 7h11" stroke="#a6c9ef" /></Svg>
        <Svg w={16}><path d="M2.500 9l6-6 6 6" stroke="#e8e9e5" strokeWidth="2.200" /><path d="M8.500 7v8" stroke="#cfd0cc" strokeWidth="2" strokeDasharray="2 1" /></Svg>
        <Svg w={16}><path d="M2.500 7l6 6 6-6" stroke="#f7f7f4" strokeWidth="2.200" /><path d="M8.500 1v7" stroke="#f7f7f4" strokeWidth="2" strokeDasharray="2 1" /></Svg>
        <Svg w={16}><rect x="3" y="1.500" width="9.500" height="6" fill="#284f84" stroke="#dedfdc" /><path d="M12.500 7.500v7H7M3 10.500h8M6 12.500h4" stroke="#dedfdc" strokeWidth="1.300" /></Svg>
        <Svg w={16}><circle cx="8.500" cy="2.500" r="1.500" stroke="#c4c5c1" /><path d="M8.500 4v10M5.500 6.500h6M2.500 9.500q1 5 6 5t6-5M1.500 11L3 8.500 5 11M12 11l2.500-2.500 1 2.500" stroke="#c4c5c1" strokeWidth="1.300" strokeDasharray="1.500 .5" /></Svg>
        <span className="ml-[4px]"><Close /></span>
      </div>
    </div>
    <div className="flex h-[6px] items-center pl-[93px]"><Svg w={12} h={2}><path d="M0 0h2v2H0zM5 0h2v2H5zM10 0h2v2h-2z" fill="#555a68" /></Svg></div>
    <div className="flex h-[29px]">
      <div className="w-[35px] border-t border-r border-[#2b2e39] bg-[#404552] pt-[3px] pl-[6px]">
        <Svg w={22}><defs><radialGradient id="bs"><stop stopColor="#000" /><stop offset=".3" stopColor="#222" /><stop offset="1" stopColor="#fff" stopOpacity="0" /></radialGradient></defs><rect x=".5" y=".5" width="21" height="21" fill="#fff" stroke="#000" /><circle cx="11" cy="11" r="8" fill="url(#bs)" /><path d="M21 16v5h-5z" fill="#88f" /><path d="M16 18.500h5M18.500 16v5" stroke="#000" /></Svg></div>
      <div className="flex grow border-b border-[#2b2e39] pt-[5px]">
        <div className="ml-[5px]"><Svg w={22}><rect x=".5" y=".5" width="21" height="21" fill="#fdbc49" stroke="#000" /><path d="M1.500 1v20" stroke="#e4892d" /><path d="M5 1v20M10 1v20M15 1v20M19 1v20" stroke="#ee9b34" strokeWidth=".8" /><path d="M7 1v20M13 1v20" stroke="#ffd477" /></Svg></div>
        <div className="ml-[12px] h-[22px] w-[22px] border border-black bg-linear-to-r from-black to-white" />
        <div className="ml-auto pt-[4px] pr-[7px]"><MenuBtn /></div>
      </div>
    </div>
    <div className="flex h-[249px] flex-col border-b border-[#2b2e39] bg-[#404552] px-[6px]">
      <Combo className="mt-[3px] h-[27px] w-[186px] shrink-0 pl-[8px]" arrow="mr-[10px] mb-[2px]"><i className="[text-shadow:0.400px_0_0_currentColor]">filter</i></Combo>
      <div className="flex h-[19px] shrink-0 items-center pb-[2px]"><i className="tracking-[0.050px]">2. Hardness 050 (51 × 51)</i></div>
      <div className="flex h-[100px] w-[186px] shrink-0 border border-[#2b2e39]"><Brushes /><div className="mt-[2px] ml-[4px] h-[28px] w-[6px] rounded-full bg-[#767b88]" /></div>
      <Combo className="mt-[2px] h-[27px] w-[186px] shrink-0 pl-[7px]" arrow="mr-[10px] mb-[2px]"><span className="pb-[2px]">Basic,</span></Combo>
      <Spin label="Spacing" value="10.0" inner="w-[165px]" fill="w-[7px]" className="mt-[2px] h-[34px] w-[186px] shrink-0" />
      <div className="mt-[7px] flex h-[16px] shrink-0 justify-between pr-[13px] pl-[8px]">
        <PagePen /><PageStar /><Dup /><Close dull />
        <Svg w={16}><path d="M13 4.500A5.500 5.500 0 1 0 12 12.500" stroke="#f0f0ee" strokeWidth="3" /><path d="M15 1v7H8z" fill="#f0f0ee" /></Svg>
      </div>
    </div>
  </div>
);

export default function App() {
  return (
    <div className="flex h-[741px] w-[1024px] flex-col overflow-hidden bg-[#383c4a] text-[11px] leading-[14px] text-[#d0d6e0] [font-family:'Liberation_Sans',Arial,sans-serif]">
      <header className="h-[49px] shrink-0 border-t border-b border-t-[#15171c] border-b-[#262933] bg-linear-to-b from-[#292d36] to-[#2f343f] to-30%">
        <div className="flex h-[24px] items-center">
          <div className="w-[204px] pl-[11px]"><Arrow /></div>
          <div className="w-[535px] text-center text-[12px] font-bold whitespace-nowrap text-[#b4b9c4]">*[Untitled]-1.0 (RGB color, 4 layers) 20x20 – GIMP</div>
          <div className="ml-[180px] flex items-center">
            <Svg w={9} h={8}><path d="M4.500 0L9 5H0zM0 6h9v1.500H0z" fill="#a9adb7" /></Svg>
            <span className="ml-[17px]"><Svg w={6} h={2}><path d="M0 0h6v2H0z" fill="#a9adb7" /></Svg></span>
            <span className="ml-[22px]"><Svg w={6}><path d="M2 0h4v4zM0 2v4h4z" fill="#8d919c" /></Svg></span>
          </div>
          <div className="ml-[18px]"><Svg w={14}><circle cx="7" cy="7" r="7" fill="#cc575d" /><path d="M4.500 4.500l5 5m0-5l-5 5" stroke="#2f343f" strokeWidth="1.700" /></Svg></div>
        </div>
        <nav className="flex h-[23px] items-center gap-[14.300px] pl-[8px] text-[13px] tracking-[0.060px] text-[#b4bac6]">
          {['File', 'Edit', 'Select', 'View', 'Image', 'Layer', 'Colors', 'Tools', 'Filters', 'Windows', 'Help'].map(m => <span key={m}>{m}</span>)}
        </nav>
      </header>
      <main className="flex h-[692px]"><LeftPanel /><Center /><RightPanel /></main>
    </div>
  );
}
